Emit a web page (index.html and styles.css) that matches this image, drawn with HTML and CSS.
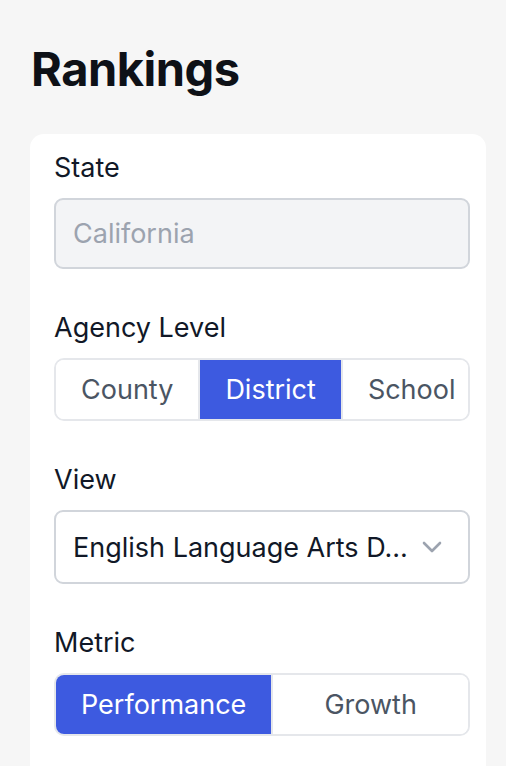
FILE: index.html
```html
<!DOCTYPE html>
<html lang="en">
<head>
<meta charset="utf-8">
<title>Rankings</title>
<link rel="stylesheet" href="styles.css">
</head>
<body>
<main class="page">
  <h1 class="title">Rankings</h1>
  <section class="card">
    <div class="field">
      <label class="label">State</label>
      <div class="input input-disabled">California</div>
    </div>
    <div class="field">
      <label class="label">Agency Level</label>
      <div class="seg">
        <button class="seg-btn">County</button>
        <button class="seg-btn active">District</button>
        <button class="seg-btn">School</button>
      </div>
    </div>
    <div class="field">
      <label class="label">View</label>
      <div class="input select">
        <span class="select-text">English Language Arts D...</span>
        <svg class="chev" width="20" height="12" viewBox="0 0 20 12" fill="none"><path d="M2 2l8 8 8-8" stroke="#9ca3af" stroke-width="2.6" stroke-linecap="round" stroke-linejoin="round"/></svg>
      </div>
    </div>
    <div class="field">
      <label class="label">Metric</label>
      <div class="seg">
        <button class="seg-btn active">Performance</button>
        <button class="seg-btn">Growth</button>
      </div>
    </div>
  </section>
</main>
</body>
</html>
```
FILE: styles.css
```css
* { box-sizing: border-box; }
html, body { margin: 0; padding: 0; }
body {
  background: #f6f6f6;
  font-family: Inter, "Noto Sans", sans-serif;
  color: #111827;
  overflow: hidden;
  height: 766px;
}
.page {
  padding: 0 20px 0 30px;
}
.title {
  margin: 0;
  padding-top: 41px;
  padding-left: 1px;
  font-size: 47px;
  line-height: 56px;
  font-weight: 700;
  letter-spacing: -0.5px;
  color: #0e1117;
}
.card {
  margin-top: 37px;
  background: #fff;
  border-radius: 14px;
  padding: 14px 16px 80px 24px;
  width: 456px;
}
.field + .field { margin-top: 39px; }
.label {
  display: block;
  font-size: 27px;
  line-height: 40px;
  margin-bottom: 10px;
  color: #111827;
}
.input {
  height: 71px;
  border: 2px solid #d1d5db;
  border-radius: 9px;
  padding: 0 17px;
  font-size: 27px;
  display: flex;
  align-items: center;
}
.input-disabled {
  background: #f3f4f6;
  color: #9ca3af;
}
.select {
  height: 74px;
  justify-content: space-between;
  color: #111827;
  padding-right: 26px;
}
.chev { display: block; }
.seg {
  display: flex;
  border: 2px solid #e5e7eb;
  border-radius: 10px;
  overflow: hidden;
  height: 63px;
}
.seg-btn {
  flex: 1 1 0;
  border: 0;
  margin: 0;
  background: #fff;
  font-family: inherit;
  font-size: 27px;
  color: #4b5563;
  padding: 0 25px;
  white-space: nowrap;
  cursor: pointer;
}
.seg-btn + .seg-btn { border-left: 2px solid #e5e7eb; }
.seg-btn.active {
  background: #3d5ae0;
  color: #fff;
}
```
